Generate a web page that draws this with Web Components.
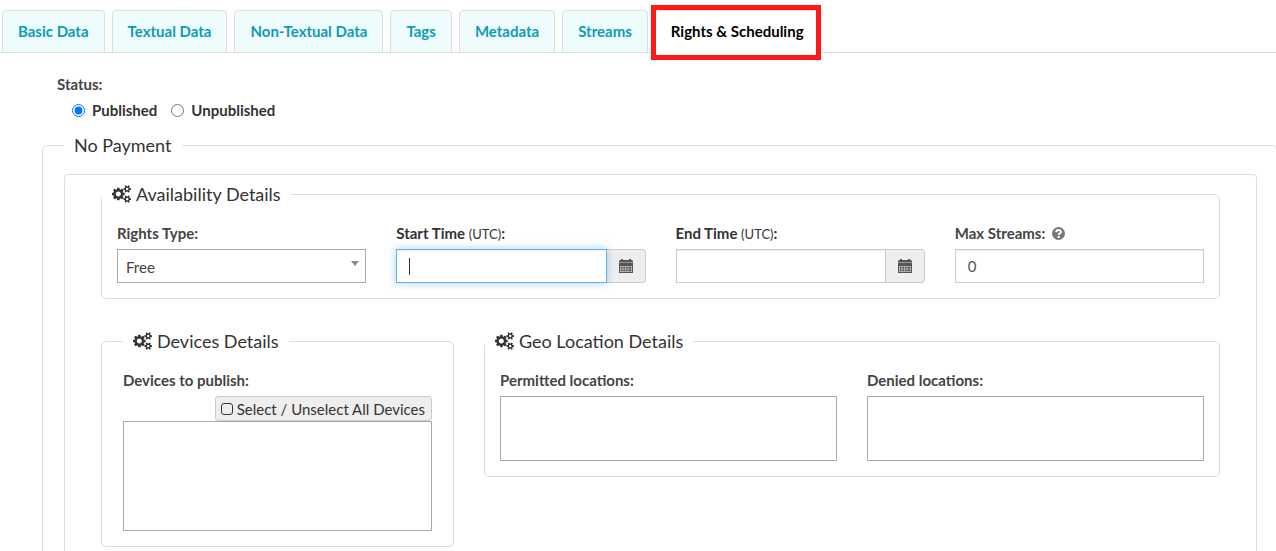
<!DOCTYPE html>
<html lang="en">
<head>
<meta charset="utf-8">
<title>Rights &amp; Scheduling</title>
<style>
  body { margin: 0; background: #fff; color: #333; font: 15px/20px Lato, "Open Sans", sans-serif; overflow: hidden; }
</style>
</head>
<body>
<rights-page></rights-page>

<script>
const define = (name, html, setup) => {
  const tpl = document.createElement('template');
  tpl.innerHTML = html;
  customElements.define(name, class extends HTMLElement {
    connectedCallback() {
      if (this.shadowRoot) return;
      const root = this.attachShadow({ mode: 'open' });
      root.append(tpl.content.cloneNode(true));
      if (setup) setup(this, root);
    }
  });
};

const SHAPES = {
  cogs: '<svg width="19" height="18" viewBox="0 0 1920 1792"><path fill="currentColor" d="M896 896q0-106-75-181t-181-75-181 75-75 181 75 181 181 75 181-75 75-181zm768 512q0-52-38-90t-90-38-90 38-38 90q0 53 37.500 90.500t90.500 37.500 90.500-37.500 37.500-90.500zm0-1024q0-52-38-90t-90-38-90 38-38 90q0 53 37.500 90.500t90.500 37.500 90.500-37.500 37.500-90.500zm-384 421v185q0 10-7 19.500t-16 10.500l-155 24q-11 35-32 76 34 48 90 115 7 11 7 20 0 12-7 19-23 30-82.500 89.500t-78.500 59.500q-11 0-21-7l-115-90q-37 19-77 31-11 108-23 155-7 24-30 24h-186q-11 0-20-7.500t-10-17.500l-23-153q-34-10-75-31l-118 89q-7 7-20 7-11 0-21-8-144-133-144-160 0-9 7-19 10-14 41-53t47-61q-23-44-35-82l-152-24q-10-1-17-9.500t-7-19.500v-185q0-10 7-19.500t16-10.500l155-24q11-35 32-76-34-48-90-115-7-11-7-20 0-12 7-20 22-30 82-89t79-59q11 0 21 7l115 90q34-18 77-32 11-108 23-154 7-24 30-24h186q11 0 20 7.500t10 17.500l23 153q34 10 75 31l118-89q8-7 20-7 11 0 21 8 144 133 144 160 0 8-7 19-12 16-42 54t-45 60q23 48 34 82l152 23q10 2 17 10.500t7 19.500zm640 533v140q0 16-149 31-12 27-30 52 51 113 51 138 0 4-4 7-122 71-124 71-8 0-46-47t-52-68q-20 2-30 2t-30-2q-14 21-52 68t-46 47q-2 0-124-71-4-3-4-7 0-25 51-138-18-25-30-52-149-15-149-31v-140q0-16 149-31 13-29 30-52-51-113-51-138 0-4 4-7 4-2 35-20t59-34 30-16q8 0 46 46.500t52 67.500q20-2 30-2t30 2q51-71 92-112l6-2q4 0 124 70 4 3 4 7 0 25-51 138 17 23 30 52 149 15 149 31zm0-1024v140q0 16-149 31-12 27-30 52 51 113 51 138 0 4-4 7-122 71-124 71-8 0-46-47t-52-68q-20 2-30 2t-30-2q-14 21-52 68t-46 47q-2 0-124-71-4-3-4-7 0-25 51-138-18-25-30-52-149-15-149-31v-140q0-16 149-31 13-29 30-52-51-113-51-138 0-4 4-7 4-2 35-20t59-34 30-16q8 0 46 46.500t52 67.500q20-2 30-2t30 2q51-71 92-112l6-2q4 0 124 70 4 3 4 7 0 25-51 138 17 23 30 52 149 15 149 31z"/></svg>',
  calendar: '<svg width="14" height="14" viewBox="0 0 14 14"><path fill="#555" d="M1 1h1V0h2v1h6V0h2v1h1l1 1v1H0V2z"/><path fill="#999" d="M0 3h14v1H0z"/><path fill="#555" d="M0 4h14v10H0z"/><path stroke="#ccc" stroke-width=".7" d="M1 7.500h12M1 10h12M1 12.500h12M1.500 7v6M4 7v6M6.500 7v6M9 7v6M12.500 7v6"/></svg>',
  help: '<svg width="13" height="13" viewBox="0 0 13 13"><circle cx="6.500" cy="6.500" r="6.500" fill="#777"/><path fill="none" stroke="#fff" stroke-width="2" d="M4.200 5.200C4.200 2.200 8.900 2.300 8.900 4.900 8.900 6.400 6.700 6.300 6.700 8"/><path fill="#fff" d="M5.600 9h2.200v2H5.600z"/></svg>'
};

define('ui-icon', `<style>:host{display:inline-flex;flex:none}svg{display:block}</style>`,
  (el, root) => root.append(document.createRange().createContextualFragment(SHAPES[el.getAttribute('name')])));

define('tab-link', `
<style>
  :host { display: block; position: relative; margin-bottom: -1px; }
  a { display: block; padding: 10px 15px 11px; border: 1px solid #ddd; border-radius: 4px 4px 0 0; background: #eefcfe; color: #0c9cb4; font-weight: 700; text-decoration: none; white-space: nowrap; }
  :host([selected]) a { background: #fff; color: #000; border-bottom-color: #fff; }
  :host([selected])::after { content: ""; position: absolute; inset: -5px -1px -7px -4px; border: 5px solid #ff1a1a; pointer-events: none; }
</style>
<a href="#"><slot></slot></a>`);

define('tab-bar', `
<style>:host { display: flex; gap: 7px; padding: 10px 2px 0; border-bottom: 1px solid #ddd; }</style>
<slot></slot>`);

define('group-box', `
<style>
  :host { display: block; min-width: 0; }
  fieldset { margin: 0; min-width: 0; border: 1px solid #ddd; border-radius: 5px; padding: var(--group-padding, 17px 15px 15px); }
  legend { display: flex; align-items: center; gap: 5px; margin-left: var(--legend-shift, -15px); padding: 0 10px; font-size: 18px; line-height: 24px; color: #333; white-space: nowrap; }
</style>
<fieldset><legend><slot name="title"></slot></legend><slot></slot></fieldset>`);

define('status-picker', `
<style>
  :host { display: block; padding: 21px 57px 0; }
  fieldset { border: 0; margin: 0; padding: 0; }
  legend { padding: 0; font-weight: 700; color: #444; }
  .options { display: flex; gap: 14px; padding: 6px 15px 0; }
  label { display: flex; align-items: center; gap: 7px; font-weight: 700; }
  input { width: 13px; height: 13px; margin: 0; accent-color: #0075ff; }
</style>
<fieldset>
  <legend>Status:</legend>
  <div class="options">
    <label><input type="radio" name="status" checked>Published</label>
    <label><input type="radio" name="status">Unpublished</label>
  </div>
</fieldset>`);

const FIELD = `
  :host { display: block; min-width: 0; }
  * { box-sizing: border-box; }
  label { display: flex; align-items: center; font-weight: 700; color: #444; margin-bottom: 6px; }
  input, select, textarea { display: block; width: 100%; margin: 0; border-radius: 0; background: #fff; color: #444; font: inherit; outline: 0; }
  input, select { height: 34px; }
`;

define('select-field', `
<style>${FIELD}
  .box { position: relative; }
  select { appearance: none; padding: 2px 8px 0; border: 1px solid #aaa; }
  .box::after { content: ""; position: absolute; right: 7px; top: 12px; border: 4px solid transparent; border-top: 5px solid #888; border-bottom: 0; pointer-events: none; }
</style>
<label for="control"><slot></slot></label>
<div class="box"><select id="control"><option>Free</option></select></div>`);

define('date-field', `
<style>${FIELD}
  label { display: block; color: #333; }
  small { font-size: 13px; line-height: 1; font-weight: 400; }
  .row { display: flex; }
  .box { position: relative; flex: 1; min-width: 0; }
  input { padding: 6px 12px; border: 1px solid #ccc; box-shadow: inset 0 1px 1px rgba(0,0,0,.075); }
  button { display: flex; align-items: center; justify-content: center; width: 39px; height: 34px; padding: 0; border: 1px solid #ccc; border-left: 0; border-radius: 0 4px 4px 0; background: #eee; }
  :host([active]) .box { z-index: 1; }
  :host([active]) input { border-color: #66afe9; box-shadow: inset 0 1px 1px rgba(0,0,0,.075), 0 0 8px rgba(102,175,233,.6); }
  :host([active]) .box::after { content: ""; position: absolute; left: 13px; top: 9px; width: 1px; height: 17px; background: #333; }
</style>
<label for="control"><slot></slot> <small>(UTC)</small>:</label>
<div class="row">
  <div class="box"><input id="control" type="text"></div>
  <button type="button" aria-label="Open calendar"><ui-icon name="calendar"></ui-icon></button>
</div>`);

define('number-field', `
<style>${FIELD}
  label { gap: 7px; }
  input { padding: 6px 12px; border: 1px solid #ccc; color: #555; box-shadow: inset 0 1px 1px rgba(0,0,0,.075); }
</style>
<label for="control"><slot></slot><ui-icon name="help"></ui-icon></label>
<input id="control" type="text" inputmode="numeric" value="0">`);

define('list-field', `
<style>${FIELD}
  textarea { height: var(--list-height, 65px); border: 1px solid #aaa; resize: none; }
</style>
<label for="control"><slot></slot></label>
<slot name="action"></slot>
<textarea id="control"></textarea>`);

define('select-all', `
<style>
  :host { display: flex; justify-content: flex-end; }
  label { display: flex; align-items: center; gap: 4px; box-sizing: border-box; height: 25px; padding: 0 6px 0 5px; border: 1px solid #ccc; border-radius: 3px; background: #eee; color: #333; white-space: nowrap; }
  input { appearance: none; box-sizing: border-box; width: 12px; height: 12px; margin: 0; border: 1px solid #333; border-radius: 3px; }
</style>
<label><input type="checkbox">Select / Unselect All Devices</label>`);

define('rights-page', `
<style>
  :host { display: block; }
  .payment { margin: 13px -1px 0 42px; --group-padding: 17px 19px 30px 21px; --legend-shift: 0px; }
  .panel { border: 1px solid #ddd; border-radius: 4px; padding: 7px 36px 30px; --group-padding: initial; --legend-shift: initial; }
  .fields { display: grid; grid-template-columns: repeat(4, 1fr); gap: 30px; }
  .groups { display: grid; grid-template-columns: repeat(3, 1fr); gap: 30px; align-items: start; margin-top: 30px; }
  .devices { --group-padding: 17px 21px 15px; --legend-shift: 0px; --list-height: 110px; }
  .geo { grid-column: span 2; }
  .places { display: grid; grid-template-columns: repeat(2, 1fr); gap: 30px; }
</style>
<tab-bar>
  <tab-link>Basic Data</tab-link>
  <tab-link>Textual Data</tab-link>
  <tab-link>Non-Textual Data</tab-link>
  <tab-link>Tags</tab-link>
  <tab-link>Metadata</tab-link>
  <tab-link>Streams</tab-link>
  <tab-link selected>Rights &amp; Scheduling</tab-link>
</tab-bar>
<status-picker></status-picker>
<group-box class="payment">
  <span slot="title">No Payment</span>
  <div class="panel">
    <group-box>
      <ui-icon slot="title" name="cogs"></ui-icon><span slot="title">Availability Details</span>
      <div class="fields">
        <select-field>Rights Type:</select-field>
        <date-field active>Start Time</date-field>
        <date-field>End Time</date-field>
        <number-field>Max Streams:</number-field>
      </div>
    </group-box>
    <div class="groups">
      <group-box class="devices">
        <ui-icon slot="title" name="cogs"></ui-icon><span slot="title">Devices Details</span>
        <list-field>Devices to publish:<select-all slot="action"></select-all></list-field>
      </group-box>
      <group-box class="geo">
        <ui-icon slot="title" name="cogs"></ui-icon><span slot="title">Geo Location Details</span>
        <div class="places">
          <list-field>Permitted locations:</list-field>
          <list-field>Denied locations:</list-field>
        </div>
      </group-box>
    </div>
  </div>
</group-box>`);
</script>
</body>
</html>
